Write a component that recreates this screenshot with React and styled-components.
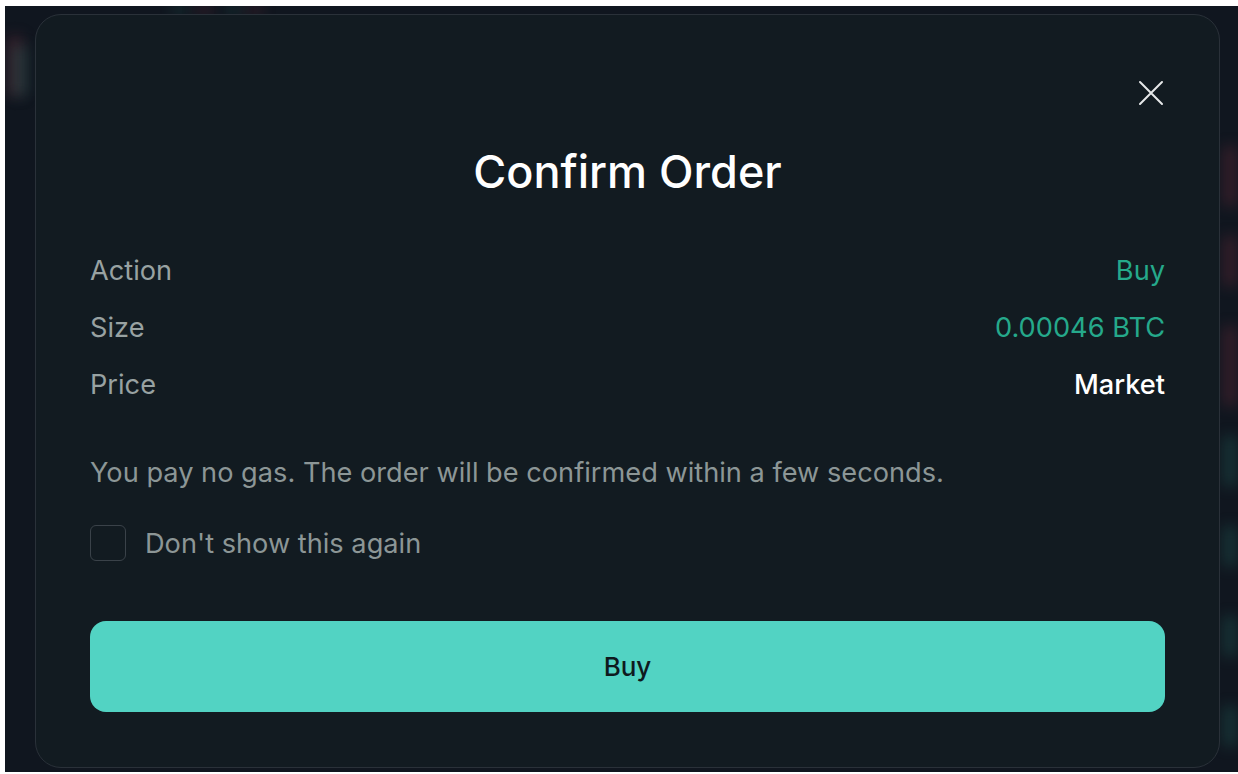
import React from "react";
import styled, { createGlobalStyle } from "styled-components";

const Global = createGlobalStyle`
  html, body { margin: 0; padding: 0; background: #ffffff; }
  body { font-family: Inter, "Noto Sans", sans-serif; -webkit-font-smoothing: antialiased; }
  #root { padding: 6px 0 2px 5px; }
`;

const Backdrop = styled.div`
  position: relative;
  width: 1233px;
  height: 766px;
  box-sizing: border-box;
  padding: 8px 18px 4px 30px;
  background: #10161f;
  overflow: hidden;
`;

const Candle = styled.div`
  position: absolute;
  width: ${(p) => p.w}px;
  height: ${(p) => p.h}px;
  background: ${(p) => (p.up ? "rgba(40,130,115,0.28)" : "rgba(150,50,70,0.28)")};
  filter: blur(7px);
`;

const Modal = styled.div`
  position: relative;
  z-index: 1;
  height: 100%;
  box-sizing: border-box;
  border: 1px solid #2a3139;
  border-radius: 26px;
  background: #121b21;
  padding: 131px 54px 54px 54px;
  display: flex;
  flex-direction: column;
`;

const Close = styled.button`
  position: absolute;
  top: 65px;
  right: 55px;
  width: 26px;
  height: 26px;
  padding: 0;
  border: 0;
  background: transparent;
  display: flex;
  align-items: center;
  justify-content: center;
  cursor: pointer;
`;

const Title = styled.h2`
  margin: 0;
  text-align: center;
  color: #ffffff;
  font-size: 45px;
  line-height: 52px;
  font-weight: 450;
`;

const Rows = styled.div`
  margin-top: 44px;
  display: flex;
  flex-direction: column;
`;

const Row = styled.div`
  height: 57px;
  display: flex;
  align-items: center;
  justify-content: space-between;
  font-size: 27.2px;
`;

const Label = styled.span`
  color: #98a2a2;
`;

const Value = styled.span`
  color: ${(p) => (p.accent ? "#25a98b" : "#ffffff")};
  font-weight: ${(p) => (p.accent ? 400 : 500)};
`;

const Note = styled.p`
  margin: 42px 0 0;
  color: #8c9696;
  font-size: 27.2px;
  line-height: 36px;
`;

const CheckRow = styled.label`
  margin-top: 34px;
  display: flex;
  align-items: center;
  gap: 19px;
  color: #8c9696;
  font-size: 27.2px;
  height: 36px;
  cursor: pointer;
`;

const Box = styled.span`
  width: 36px;
  height: 36px;
  box-sizing: border-box;
  border: 1.5px solid #3a4249;
  border-radius: 6px;
  flex: none;
`;

const BuyButton = styled.button`
  margin-top: 60px;
  height: 91px;
  border: 0;
  border-radius: 16px;
  background: #52d3c3;
  color: #0e1a1e;
  font-family: Inter, "Noto Sans", sans-serif;
  font-size: 26px;
  font-weight: 500;
  cursor: pointer;
`;

const candles = [
  { x: 2, y: 30, w: 16, h: 60, up: false },
  { x: 8, y: 40, w: 14, h: 50, up: true },
  { x: 168, y: 0, w: 14, h: 8, up: true },
  { x: 190, y: 0, w: 18, h: 8, up: false },
  { x: 222, y: 0, w: 14, h: 8, up: true },
  { x: 240, y: 0, w: 18, h: 8, up: false },
  { x: 1218, y: 140, w: 14, h: 60, up: false },
  { x: 1218, y: 230, w: 14, h: 50, up: false },
  { x: 1218, y: 320, w: 14, h: 80, up: false },
  { x: 1218, y: 430, w: 14, h: 50, up: true },
  { x: 1218, y: 520, w: 14, h: 40, up: true },
  { x: 1218, y: 610, w: 14, h: 40, up: true },
  { x: 1218, y: 700, w: 14, h: 40, up: true },
];

export default function App() {
  return (
    <>
      <Global />
      <Backdrop>
        {candles.map((c, i) => (
          <Candle key={i} w={c.w} h={c.h} up={c.up} style={{ left: c.x, top: c.y }} />
        ))}
        <Modal>
          <Close aria-label="Close">
            <svg width="26" height="26" viewBox="0 0 26 26" fill="none">
              <path d="M2 2 L24 24 M24 2 L2 24" stroke="#e6e8e9" strokeWidth="2" strokeLinecap="round" />
            </svg>
          </Close>
          <Title>Confirm Order</Title>
          <Rows>
            <Row>
              <Label>Action</Label>
              <Value accent>Buy</Value>
            </Row>
            <Row>
              <Label>Size</Label>
              <Value accent>0.00046 BTC</Value>
            </Row>
            <Row>
              <Label>Price</Label>
              <Value>Market</Value>
            </Row>
          </Rows>
          <Note>You pay no gas. The order will be confirmed within a few seconds.</Note>
          <CheckRow>
            <Box />
            Don't show this again
          </CheckRow>
          <BuyButton>Buy</BuyButton>
        </Modal>
      </Backdrop>
    </>
  );
}
